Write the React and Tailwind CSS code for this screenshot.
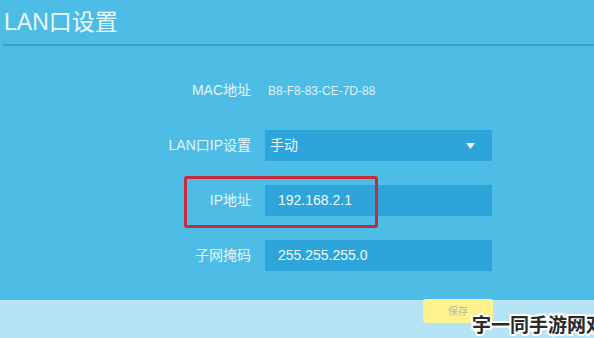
export default function App() {
  const font = { fontFamily: '"Liberation Sans", "Noto Sans CJK SC", sans-serif' };
  return (
    <div
      className="relative w-[594px] h-[338px] overflow-hidden bg-[#4ebde5] flex flex-col"
      style={font}
    >
      <div className="h-[44px] pl-[4px] pt-[8px] shrink-0">
        <div className="text-[23px] leading-[28px] text-[#eaf8fd]">LAN口设置</div>
      </div>
      <div className="ml-[3px] h-[2px] bg-[#3a9fca] shrink-0" />
      <div className="flex flex-col gap-[24px] pt-[29px] h-[254px] shrink-0">
        <div className="flex items-center h-[31px]">
          <div className="w-[251px] text-right text-[14px] text-[#e4f5fb]">MAC地址</div>
          <div className="ml-[17px] text-[12px] text-[#dff2fa]">B8-F8-83-CE-7D-88</div>
        </div>
        <div className="flex items-center h-[31px]">
          <div className="w-[251px] text-right text-[14px] text-[#e4f5fb]">LAN口IP设置</div>
          <div className="ml-[14px] w-[227px] h-[31px] bg-[#2ea5da] flex items-center justify-between pl-[5px] pr-[17px]">
            <span className="text-[14px] text-[#eef9fd]">手动</span>
            <svg width="9" height="6" viewBox="0 0 9 6">
              <path d="M0 0 L9 0 L4.5 6 Z" fill="#f2fbff" />
            </svg>
          </div>
        </div>
        <div className="flex items-center h-[31px]">
          <div className="w-[251px] text-right text-[14px] text-[#e4f5fb]">IP地址</div>
          <div className="ml-[14px] w-[227px] h-[31px] bg-[#2ea5da] flex items-center pl-[13px]">
            <span className="text-[14px] text-[#eef9fd]">192.168.2.1</span>
          </div>
        </div>
        <div className="flex items-center h-[31px]">
          <div className="w-[251px] text-right text-[14px] text-[#e4f5fb]">子网掩码</div>
          <div className="ml-[14px] w-[227px] h-[31px] bg-[#2ea5da] flex items-center pl-[13px]">
            <span className="text-[14px] text-[#eef9fd]">255.255.255.0</span>
          </div>
        </div>
      </div>
      <div className="flex-1 bg-[#b5e4f4] relative">
        <div className="absolute left-[423px] top-[-1px] w-[70px] h-[24px] rounded-[3px] bg-[#fdf28e] flex items-center justify-center">
          <span className="text-[10px] text-[#b9b8a3]">保存</span>
        </div>
      </div>
      <div className="absolute left-[184px] top-[176px] w-[194px] h-[52px] border-[3px] border-[#c52a3d] rounded-[3px]" />
      <div
        className="absolute left-[472px] top-[312px] text-[19px] leading-[24px] whitespace-nowrap text-[#2a2a2a] [paint-order:stroke_fill] [-webkit-text-stroke:4px_#ffffff]"
        style={{ fontFamily: '"Noto Sans CJK SC", sans-serif', fontWeight: 700 }}
      >
        宇一同手游网双
      </div>
    </div>
  );
}
